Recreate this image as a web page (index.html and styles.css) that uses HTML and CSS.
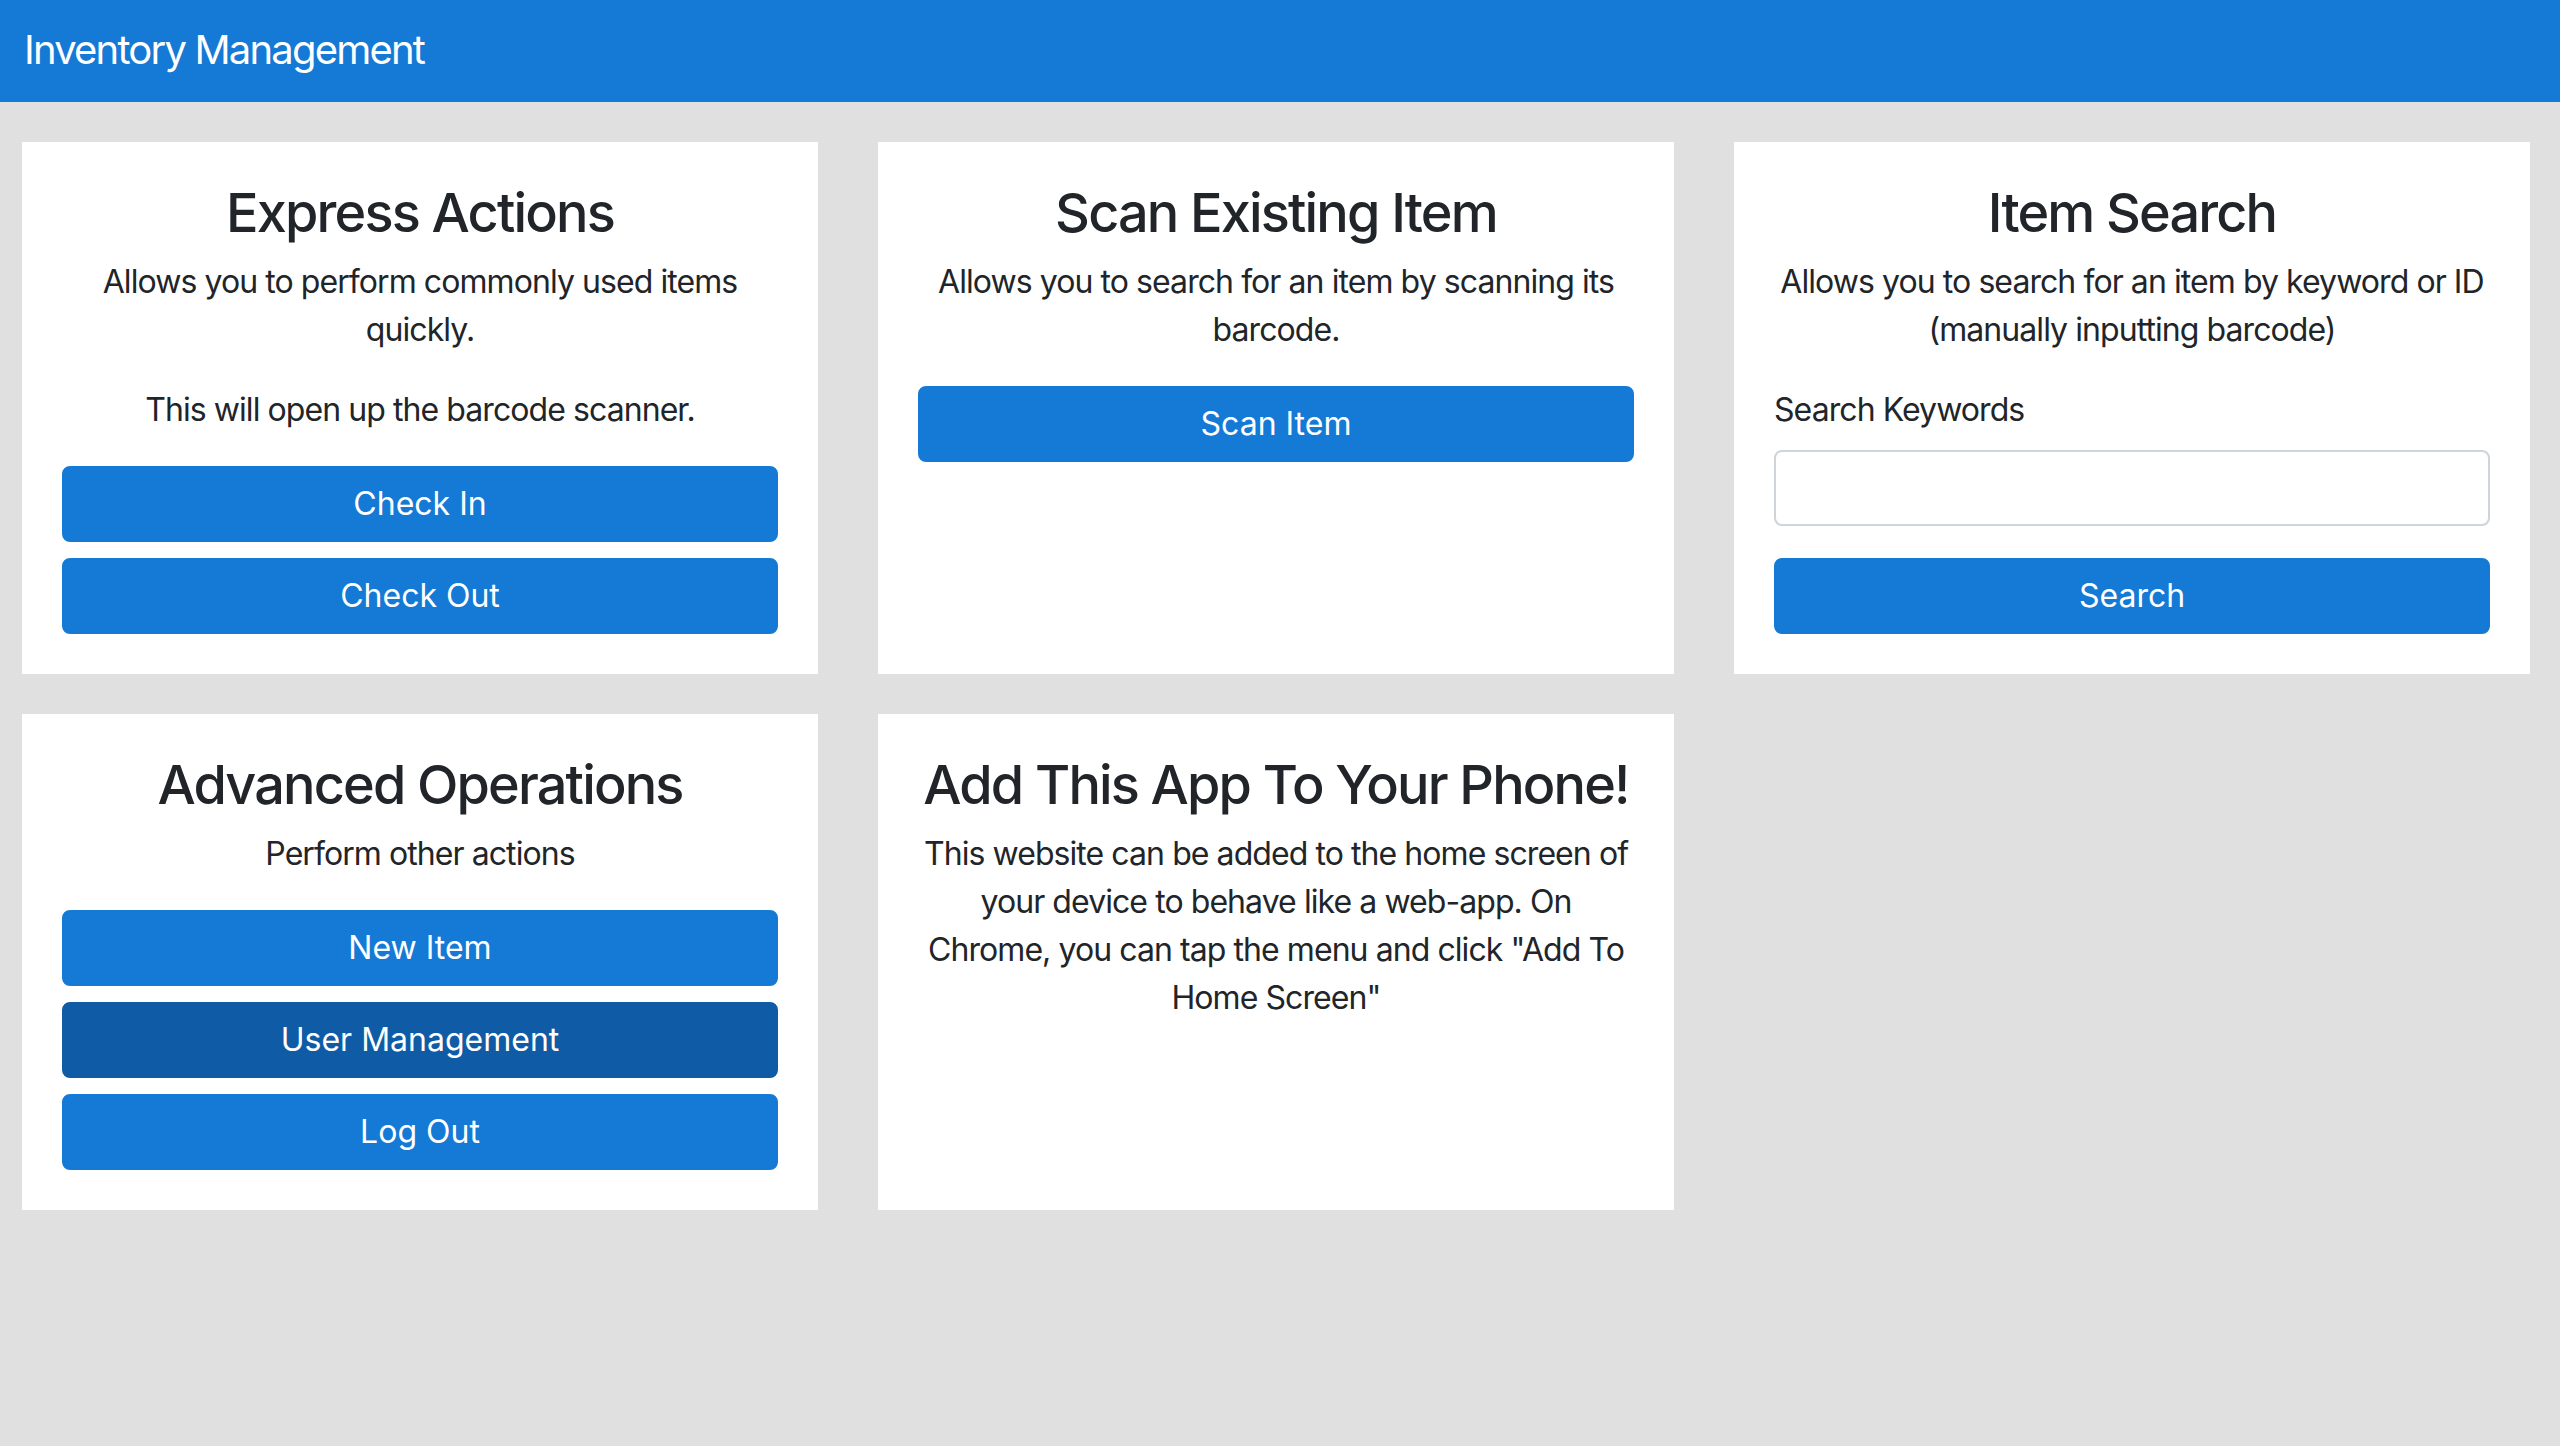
FILE: index.html
```html
<!DOCTYPE html>
<html lang="en">
<head>
    <meta charset="UTF-8">
    <meta name="viewport" content="width=device-width, initial-scale=1.0">
    <title>Inventory Management</title>
    <link rel="stylesheet" href="styles.css">
</head>
<body>
    <nav class="navbar">
        <span class="navbar-brand">Inventory Management</span>
    </nav>

    <main class="dashboard">
        <section class="card">
            <h3 class="card-title">Express Actions</h3>
            <p>Allows you to perform commonly used items quickly.</p>
            <p>This will open up the barcode scanner.</p>
            <button class="btn">Check In</button>
            <button class="btn">Check Out</button>
        </section>

        <section class="card">
            <h3 class="card-title">Scan Existing Item</h3>
            <p>Allows you to search for an item by scanning its barcode.</p>
            <button class="btn">Scan Item</button>
        </section>

        <section class="card">
            <h3 class="card-title">Item Search</h3>
            <p>Allows you to search for an item by keyword or ID (manually inputting barcode)</p>
            <div class="form-group">
                <label for="keywords">Search Keywords</label>
                <input type="text" id="keywords" class="form-control">
            </div>
            <button class="btn">Search</button>
        </section>

        <section class="card">
            <h3 class="card-title">Advanced Operations</h3>
            <p>Perform other actions</p>
            <button class="btn">New Item</button>
            <button class="btn btn-active">User Management</button>
            <button class="btn">Log Out</button>
        </section>

        <section class="card">
            <h3 class="card-title">Add This App To Your Phone!</h3>
            <p>This website can be added to the home screen of your device to behave like a web-app. On Chrome, you can tap the menu and click "Add To Home Screen"</p>
        </section>
    </main>
</body>
</html>
```

FILE: styles.css
```css
body {
    margin: 0;
    min-height: 100vh;
    background: #e0e0e0;
    font-family: Inter, "Liberation Sans", sans-serif;
    font-size: 32px;
    line-height: 1.5;
    letter-spacing: -0.029em;
    color: #212529;
}

.navbar {
    display: flex;
    align-items: center;
    height: 102px;
    padding: 0 24px 3px;
    box-sizing: border-box;
    background: #1579d6;
}

.navbar-brand {
    font-size: 40px;
    letter-spacing: -0.045em;
    color: white;
}

.dashboard {
    display: grid;
    grid-template-columns: repeat(3, 1fr);
    gap: 40px 60px;
    padding: 40px 30px 40px 22px;
}

.card {
    background: white;
    padding: 40px;
    text-align: center;
}

.card-title {
    font-size: 54px;
    font-weight: 500;
    line-height: 1.15;
    letter-spacing: -0.034em;
    margin: 0 0 14px;
}

.card p {
    margin: 0 0 32px;
}

.card p:last-child {
    margin-bottom: 0;
}

.form-group {
    text-align: left;
    margin-bottom: 32px;
}

.form-group label {
    display: block;
    margin-bottom: 16px;
}

.form-control {
    display: block;
    box-sizing: border-box;
    width: 100%;
    height: 76px;
    padding: 12px 24px;
    font: inherit;
    border: 2px solid #ced4da;
    border-radius: 8px;
    background: white;
}

.btn {
    display: block;
    width: 100%;
    padding: 12px 24px;
    font: inherit;
    color: white;
    background: #1579d6;
    border: 2px solid #1579d6;
    border-radius: 8px;
    cursor: pointer;
}

.btn + .btn {
    margin-top: 16px;
}

.btn-active {
    background: #105ba6;
    border-color: #105ba6;
}
```
